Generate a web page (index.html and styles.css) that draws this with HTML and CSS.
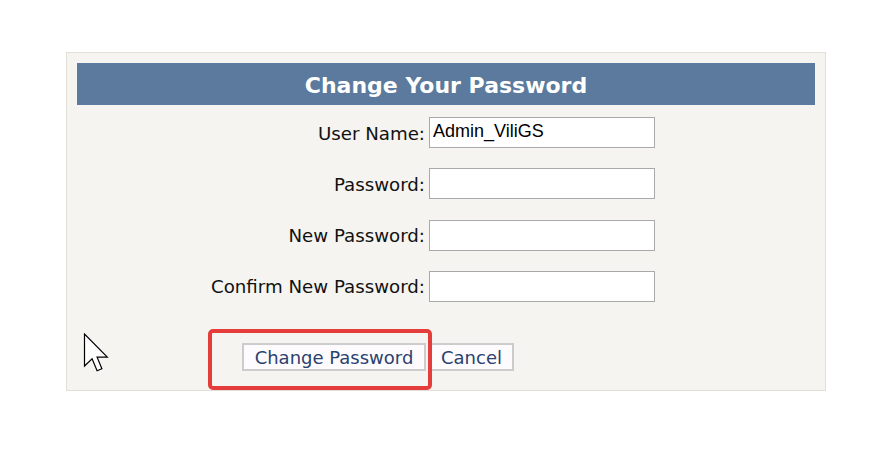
FILE: index.html
```html
<!DOCTYPE html>
<html>
<head>
<meta charset="utf-8">
<link rel="stylesheet" href="styles.css">
</head>
<body>
<div class="panel">
  <div class="header">Change Your Password</div>
  <div class="form">
    <label class="lbl">User Name:</label>
    <input class="field" type="text" value="Admin_ViliGS">
    <label class="lbl">Password:</label>
    <input class="field" type="password">
    <label class="lbl">New Password:</label>
    <input class="field" type="password">
    <label class="lbl">Confirm New Password:</label>
    <input class="field" type="password">
  </div>
  <div class="actions">
    <button class="btn btn-change">Change Password</button>
    <button class="btn btn-cancel">Cancel</button>
  </div>
  <div class="highlight"></div>
  <svg class="cursor" width="27" height="40" viewBox="0 0 13 20">
    <path d="M0.5 0.5 L0.5 16.5 L4.3 12.9 L6.8 18.9 L9.2 17.9 L6.8 12.1 L11.9 12.1 Z" fill="#fff" stroke="#000" stroke-width="0.6" stroke-linejoin="miter"/>
  </svg>
</div>
</body>
</html>
```
FILE: styles.css
```css
html, body {
  margin: 0;
  padding: 0;
  background: #ffffff;
}
body {
  padding: 52px 0 0 66px;
  font-family: "DejaVu Sans", Verdana, sans-serif;
}
.panel {
  position: relative;
  box-sizing: border-box;
  width: 760px;
  height: 339px;
  background: #f5f4f0;
  border: 1px solid #e2dfd7;
  padding: 10px 10px 0 10px;
}
.header {
  height: 42px;
  background: #5b7a9d;
  color: #ffffff;
  font-weight: bold;
  font-size: 22px;
  display: flex;
  align-items: center;
  justify-content: center;
  padding-top: 3px;
  box-sizing: border-box;
}
.form {
  display: grid;
  grid-template-columns: 348px 226px;
  grid-auto-rows: 31px;
  column-gap: 4px;
  row-gap: 20.3px;
  margin-top: 12px;
  align-items: center;
}
.lbl {
  text-align: right;
  font-size: 18.2px;
  color: #111;
  padding-top: 1px;
}
.field {
  box-sizing: border-box;
  height: 31px;
  width: 226px;
  margin: 0;
  border: 1px solid #a9a9a9;
  background: #fff;
  font-family: "Liberation Sans", Arial, sans-serif;
  font-size: 18px;
  padding: 0 3px 2px 3px;
  color: #000;
}
.actions {
  display: flex;
  gap: 3px;
  margin-top: 41px;
  padding-left: 165px;
}
.btn {
  box-sizing: border-box;
  height: 28px;
  background: #fdfbfd;
  border: 2px solid #cccccc;
  font-family: "DejaVu Sans", Verdana, sans-serif;
  font-size: 18px;
  line-height: 1;
  color: #2b416e;
  padding: 3px 0 0 0;
  margin: 0;
  white-space: nowrap;
  text-align: center;
}
.btn-change {
  width: 184px;
}
.btn-cancel {
  width: 85px;
}
.highlight {
  position: absolute;
  left: 141px;
  top: 276px;
  width: 224px;
  height: 61px;
  box-sizing: border-box;
  border: 4px solid #e53c3c;
  border-radius: 5px;
}
.cursor {
  position: absolute;
  left: 16px;
  top: 280px;
}
```
